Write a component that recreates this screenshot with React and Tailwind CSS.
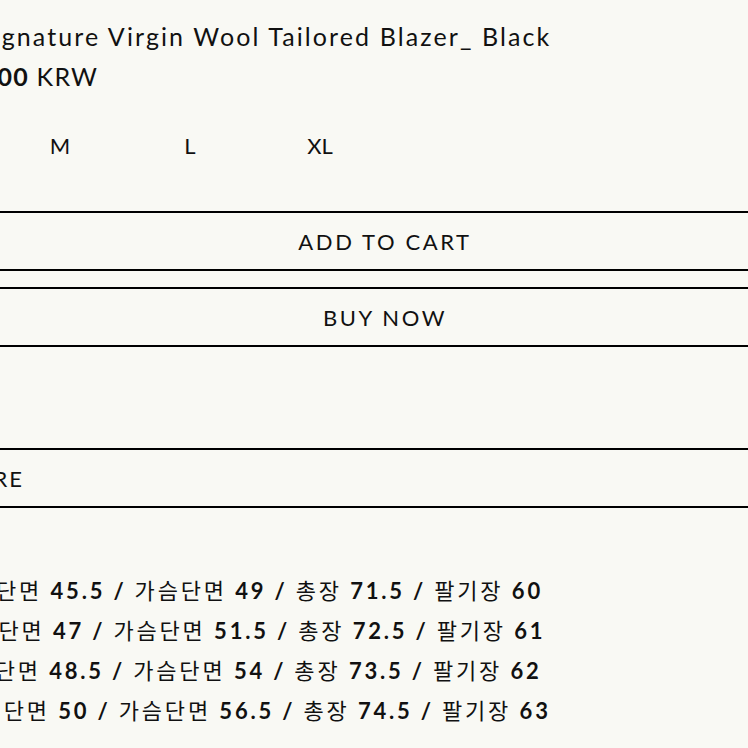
export default function App() {
  const chart = [
    ["S", "45.5", "49", "71.5", "60", "ml-0"],
    ["M", "47", "51.5", "72.5", "61", "-ml-[6px]"],
    ["L", "48.5", "54", "73.5", "62", "ml-0"],
    ["XL", "50", "56.5", "74.5", "63", "-ml-[8px]"],
  ];
  const S = () => <span className="font-bold"> / </span>;
  return (
    <div className="w-[748px] h-[748px] overflow-hidden bg-[#f9f9f4] text-[#111]" style={{ fontFamily: '"Lato", "Noto Sans CJK KR", sans-serif' }}>
      <div className="-ml-[135px] w-[1040px] flex flex-col">
        <div className="pl-[113px] pt-[18px] text-[25px] leading-[36px] tracking-[2.1px] whitespace-nowrap">
          Signature Virgin Wool Tailored Blazer_ Black
        </div>
        <div className="pl-[40px] mt-[4px] text-[25px] leading-[36px] tracking-[1.2px] whitespace-nowrap">
          <span className="font-bold">1,290,000</span> KRW
        </div>
        <div className="flex mt-[37px] text-[22px] leading-[30px]">
          {["S", "M", "L", "XL"].map((s) => (
            <div key={s} className="w-[130px] text-center">{s}</div>
          ))}
        </div>
        <div className="mt-[50px] flex flex-col gap-[16px]">
          <div className="h-[60px] border-y-2 border-black flex items-center justify-center text-[22px] tracking-[2.6px]">ADD TO CART</div>
          <div className="h-[60px] border-y-2 border-black flex items-center justify-center text-[22px] tracking-[2.6px]">BUY NOW</div>
        </div>
        <div className="mt-[101px] h-[60px] border-y-2 border-black flex items-center pl-[10px] text-[22px] tracking-[2px] whitespace-nowrap">
          SIZE &amp; CARE
        </div>
        <div className="mt-[63px] flex flex-col pl-[45px] text-[22px] leading-[40px] tracking-[2.8px] whitespace-nowrap">
          {chart.map((r) => (
            <div key={r[0]} className={r[5]}>
              {r[0]} : 어깨단면 <span className="font-bold">{r[1]}</span><S />가슴단면 <span className="font-bold">{r[2]}</span><S />총장 <span className="font-bold">{r[3]}</span><S />팔기장 <span className="font-bold">{r[4]}</span>
            </div>
          ))}
        </div>
      </div>
    </div>
  );
}
